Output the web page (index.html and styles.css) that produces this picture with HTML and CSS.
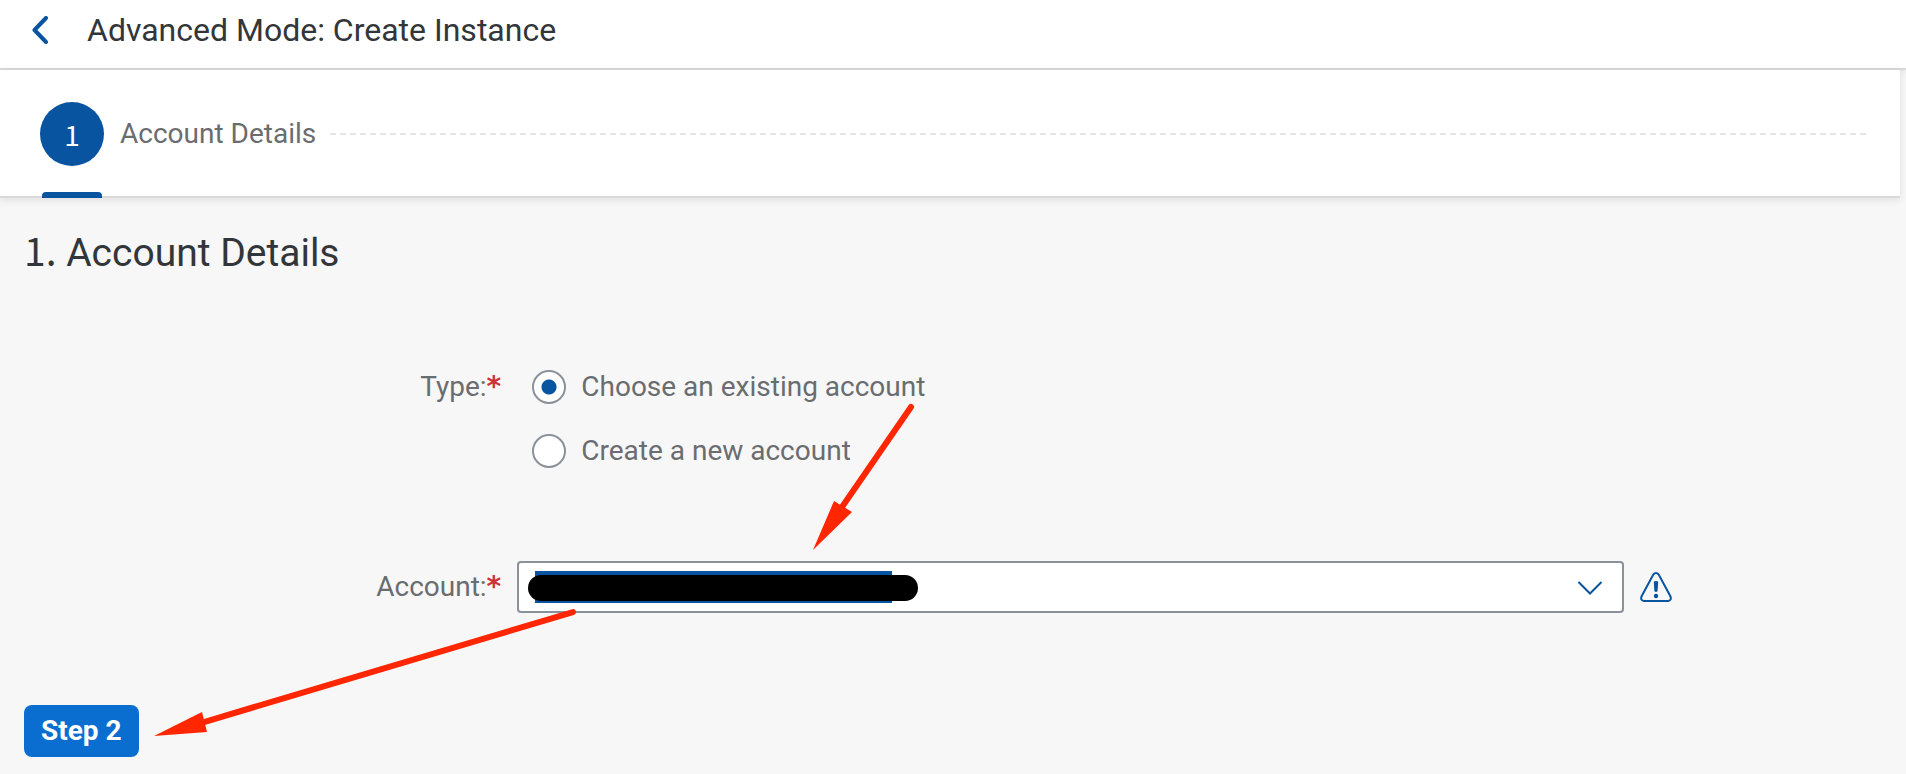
FILE: index.html
```html
<!DOCTYPE html>
<html lang="en">
<head>
<meta charset="utf-8">
<title>Advanced Mode: Create Instance</title>
<link rel="stylesheet" href="styles.css">
</head>
<body>
<header class="page-header">
  <button class="back" type="button" aria-label="Back">
    <svg width="16" height="28" viewBox="0 0 16 28"><path d="M14 2 2.500 14 14 26"/></svg>
  </button>
  <h1 class="page-title">Advanced Mode: Create Instance</h1>
</header>
<nav class="wizard" aria-label="Steps">
  <a class="step" href="#account" aria-current="step">
    <span class="step-number numeral">1</span>
    <span class="step-name">Account Details</span>
  </a>
  <span class="step-line"></span>
</nav>
<main class="content" id="account">
  <h2 class="section-title"><span class="numeral">1.</span> Account Details</h2>
  <form class="form">
    <div class="row" role="radiogroup" aria-labelledby="type-label">
      <span class="label" id="type-label">Type:<span class="required">*</span></span>
      <div class="options">
        <label class="option"><input class="radio" type="radio" name="type" checked>Choose an existing account</label>
        <label class="option"><input class="radio" type="radio" name="type">Create a new account</label>
      </div>
    </div>
    <div class="row">
      <label class="label" for="account-input">Account:<span class="required">*</span></label>
      <div class="combo">
        <input class="combo-input" id="account-input" type="text">
        <span class="selection"></span>
        <span class="redaction"></span>
        <button class="combo-toggle" type="button" aria-label="Show accounts">
          <svg width="26" height="16" viewBox="0 0 26 16"><path d="M1.500 2 13 13.500 24.500 2"/></svg>
        </button>
      </div>
      <button class="warning" type="button" aria-label="Warning">
        <svg width="32" height="30" viewBox="0 0 32 30">
          <path class="warning-outline" d="M13.300 2.500Q16 -0.500 18.700 2.500L30.500 24.500Q31.800 28.500 28 29H4Q0.200 28.500 1.500 24.500Z"/>
          <path class="warning-mark" d="M13.800 9.500Q16 8.500 18.200 9.500L17.600 19Q16 21 14.400 19Z"/>
          <circle class="warning-mark" cx="16" cy="24" r="2.200"/>
        </svg>
      </button>
    </div>
    <button class="next" type="button">Step 2</button>
  </form>
</main>
<svg class="arrows" width="1000" height="774" viewBox="0 0 1000 774" aria-hidden="true">
  <path class="shaft" d="M911 407 842 507M573 612 204 722"/>
  <path class="head" d="M813 550 834 501 852 512ZM154 736 202 712 207 732Z"/>
</svg>
</body>
</html>
```
FILE: styles.css
```css
* { box-sizing: border-box; }

body {
  margin: 0;
  background: #f7f7f7;
  color: #32363a;
  font-family: Roboto, "Noto Sans", sans-serif;
  font-size: 28px;
  line-height: 40px;
}

button {
  padding: 0;
  border: 0;
  background: none;
  font: inherit;
  cursor: pointer;
}

svg { display: block; fill: none; }

.numeral { font-family: "Noto Sans CJK SC", sans-serif; }

.page-header {
  display: flex;
  align-items: center;
  gap: 39px;
  padding: 6px 32px 14px;
  border-bottom: 2px solid #d9d9d9;
  background: #fff;
  box-shadow: 0 2px 8px rgba(0, 0, 0, 0.1);
}

.back path { stroke: #0854a0; stroke-width: 4; stroke-linecap: round; stroke-linejoin: round; }

.page-title { margin: 0; font-size: 32px; font-weight: 400; line-height: 48px; }

.wizard {
  position: relative;
  display: flex;
  align-items: center;
  gap: 14px;
  height: 128px;
  margin-right: 6px;
  padding: 2px 32px 0 40px;
  border-bottom: 2px solid #d9d9d9;
  background: #fff;
  box-shadow: 0 2px 8px rgba(0, 0, 0, 0.1);
}

.step { display: flex; align-items: center; gap: 16px; color: #6a6d70; text-decoration: none; }

.step-number {
  width: 64px;
  height: 64px;
  border-radius: 50%;
  background: #0854a0;
  color: #fff;
  line-height: 64px;
  text-align: center;
}

.step::after {
  content: "";
  position: absolute;
  bottom: -2px;
  left: 42px;
  width: 60px;
  height: 6px;
  border-radius: 4px 4px 0 0;
  background: #0854a0;
}

.step-line {
  flex: 1;
  height: 2px;
  background: repeating-linear-gradient(90deg, #e5e5e5 0 6px, transparent 6px 10px);
}

.content { padding: 23px 24px 16px; }

.section-title { height: 56px; margin: 0; font-size: 39px; font-weight: 400; line-height: 56px; }

.form { margin: 78px -24px 0; }

.row {
  display: grid;
  grid-template-columns: 501fr 1106fr 266fr;
  column-gap: 16px;
  align-items: start;
}

.row + .row { align-items: center; margin-top: 72px; }

.label { height: 64px; color: #6a6d70; line-height: 64px; text-align: right; }

.required { color: #cc3333; font-family: "DejaVu Sans", sans-serif; font-weight: 700; }

.options { display: grid; padding-left: 15px; }

.option {
  display: flex;
  align-items: center;
  gap: 15px;
  color: #6a6d70;
  line-height: 64px;
}

.radio {
  appearance: none;
  width: 34px;
  height: 34px;
  margin: 0;
  border: 2px solid #89919a;
  border-radius: 50%;
  background: #fff;
}

.radio:checked { background: radial-gradient(circle, #0854a0 7px, #fff 8px); }

.combo { position: relative; display: flex; height: 52px; border: 2px solid #89919a; border-radius: 4px; background: #fff; }

.combo-input { flex: 1; min-width: 0; padding: 0 16px; border: 0; outline: 0; background: none; font: inherit; }

.combo-toggle { padding: 2px 19px 0; }

.combo-toggle path { stroke: #0854a0; stroke-width: 2; }

.selection { position: absolute; top: 8px; left: 16px; width: 357px; height: 32px; background: #0854a0; }

.redaction { position: absolute; top: 12px; left: 9px; width: 390px; height: 26px; border-radius: 13px; background: #000; }

.warning { justify-self: start; }

.warning-outline { stroke: #0854a0; stroke-width: 2; }

.warning-mark { fill: #0854a0; }

.next {
  margin: 86px 0 0 24px;
  padding: 0 17px;
  border-radius: 8px;
  background: #0a6ed1;
  color: #fff;
  font-weight: 700;
  line-height: 52px;
}

.arrows { position: absolute; top: 0; left: 0; pointer-events: none; }

.shaft { stroke: #ff2600; stroke-width: 6; stroke-linecap: round; }

.head { fill: #ff2600; }
```
